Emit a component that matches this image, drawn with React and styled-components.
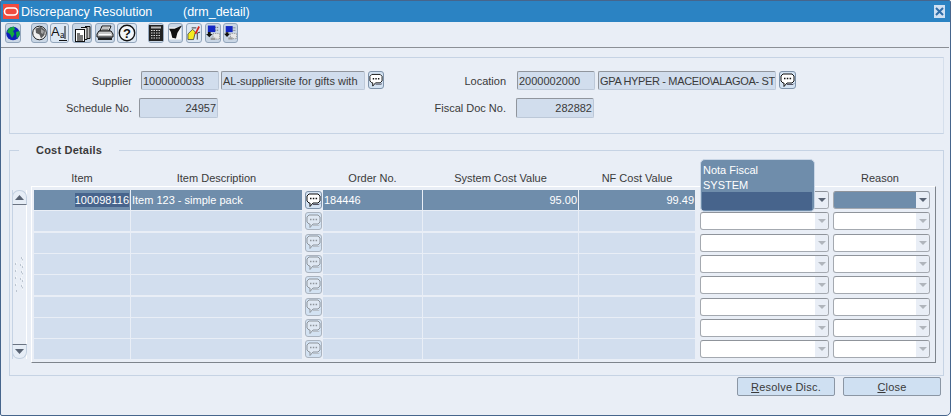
import styled, { createGlobalStyle } from "styled-components";

const GlobalStyle = createGlobalStyle`
    html, body {
        margin: 0;
        background: #ffffff;
    }

    * {
        box-sizing: border-box;
    }
`;

const Window = styled.div`
    width: 951px;
    height: 416px;
    display: flex;
    flex-direction: column;
    background: #e9eef6;
    border: 1px solid #46658c;
    border-radius: 2px 2px 5px 2px;
    font-family: "Liberation Sans", Arial, sans-serif;
    font-size: 11px;
    color: #3a3a3a;
`;

const TitleBar = styled.div`
    height: 21px;
    flex: none;
    display: flex;
    align-items: center;
    padding: 0 5px 0 2px;
    background: #2b83c3;
    color: #ffffff;
    font-size: 12.5px;
`;

const TitleText = styled.span`
    margin-left: 2px;
    width: 162px;
`;

const CloseBox = styled.div`
    margin-left: auto;
    width: 11px;
    height: 13px;
    display: flex;
    align-items: center;
    justify-content: center;
    background: #cfe0f2;
`;

const Toolbar = styled.div`
    height: 26px;
    flex: none;
    display: flex;
    align-items: flex-start;
    padding: 1px 0 0 4px;
    border-bottom: 1px solid #8b8f96;
    margin-right: 1px;
`;

const ToolButton = styled.div`
    width: ${(props) => props.$width || 17}px;
    height: 20px;
    margin-left: ${(props) => props.$ml || 0}px;
    display: flex;
    align-items: center;
    justify-content: center;
    background: ${(props) => (props.$light ? "#dce7f3" : "#c9d6e5")};
    border: 1px solid #93a6bc;
    border-radius: 3px;
`;

const Panel = styled.div`
    height: 77px;
    flex: none;
    margin: 9px 6px 0 8px;
    padding: 12px 0 0 0;
    display: flex;
    flex-direction: column;
    gap: 8px;
    border: 1px solid #c6d3e4;
    border-right-color: #d5dfec;
`;

const FormRow = styled.div`
    height: 20px;
    display: flex;
    align-items: center;
`;

const Label = styled.label`
    width: ${(props) => props.$width}px;
    flex: none;
    padding-top: ${(props) => props.$pt || 0}px;
    text-align: right;
`;

const Field = styled.div`
    width: ${(props) => props.$width}px;
    height: ${(props) => props.$height || 19}px;
    margin-left: ${(props) => props.$ml}px;
    flex: none;
    padding: ${(props) => props.$pt || 0}px 1px 0;
    display: flex;
    align-items: center;
    justify-content: ${(props) => (props.$right ? "flex-end" : "flex-start")};
    background: #d1dded;
    border: 1px solid #bcc8d8;
    border-top-color: #90959d;
    border-left-color: #90959d;
    border-radius: 2px;
    letter-spacing: ${(props) => props.$tight || 0}px;
    white-space: nowrap;
    overflow: hidden;
`;

const ChatButton = styled.div`
    width: ${(props) => props.$width || 16}px;
    height: 18px;
    margin-left: ${(props) => props.$ml || 0}px;
    flex: none;
    display: flex;
    align-items: center;
    justify-content: center;
    background: #d3e2f2;
    border: 1px solid ${(props) => (props.$off ? "#aab3bf" : "#7f93aa")};
    border-radius: 3px;
`;

const Group = styled.div`
    height: 226px;
    flex: none;
    position: relative;
    margin: 16px 6px 0 8px;
    padding: 21px 6px 0 2px;
    display: flex;
    gap: 4px;
    border: 1px solid #c6d3e4;
`;

const GroupTitle = styled.div`
    position: absolute;
    top: -8px;
    left: 9px;
    padding: 0 17px 0 17px;
    background: #e9eef6;
    font-size: 11px;
    font-weight: bold;
    letter-spacing: 0.2px;
    line-height: 15px;
    color: #3a3a3a;
`;

const Scrollbar = styled.div`
    width: 15px;
    height: 169px;
    margin-top: 18px;
    flex: none;
    display: flex;
    flex-direction: column;
    justify-content: space-between;
    align-items: center;
    border-left: 1px solid #c6d3e4;
    border-right: 1px solid #ffffff;
`;

const ScrollButton = styled.div`
    width: 15px;
    height: 15px;
    flex: none;
    display: flex;
    align-items: center;
    justify-content: center;
    background: #e6edf6;
    border: 1px solid #c3d0e0;
    border-radius: ${(props) =>
        props.$down ? "0 0 7px 7px" : "7px 7px 0 0"};
    border-${(props) => (props.$down ? "top" : "bottom")}: 1px solid #6b7482;
`;

const TableArea = styled.div`
    width: 905px;
    flex: none;
`;

const Columns = styled.div`
    display: grid;
    grid-template-columns: 96px 171px 19px 99px 155px 116px 133px 100px;
    column-gap: 1px;
`;

const HeaderRow = styled(Columns)`
    height: 14px;
    padding-left: 3px;
    line-height: 12px;
`;

const HeaderCell = styled.div`
    text-align: center;
    white-space: nowrap;
`;

const Table = styled.div`
    height: 177px;
    padding: 3px 0 0 2px;
    display: flex;
    flex-direction: column;
    gap: 1.33px;
    border-top: 1px solid #ffffff;
    border-left: 1px solid #ffffff;
    border-right: 1px solid #7e848c;
    border-bottom: 1px solid #7e848c;
`;

const Row = styled(Columns)`
    height: 20px;
    flex: none;
`;

const Cell = styled.div`
    display: flex;
    align-items: center;
    justify-content: ${(props) => (props.$right ? "flex-end" : "flex-start")};
    padding: 0 1px 1px;
    white-space: nowrap;
    background: ${(props) => (props.$active ? "#6f8dab" : "#d2deee")};
    color: ${(props) => (props.$active ? "#ffffff" : "inherit")};
`;

const SelectedText = styled.span`
    background: #47648c;
    padding: 1px 0;
`;

const ChatCell = styled.div`
    display: flex;
    align-items: center;
    justify-content: center;
    padding-left: 1px;
`;

const SelectCell = styled.div`
    display: flex;
    align-items: center;
    padding-left: ${(props) => props.$pl}px;
`;

const Select = styled.div`
    width: ${(props) => props.$width}px;
    height: 18px;
    display: flex;
    justify-content: flex-end;
    background: ${(props) => (props.$active ? "#6f8dab" : "#ffffff")};
    border: 1px solid #a4a9b0;
    border-top-color: #8f949b;
    border-radius: 3px;
    overflow: hidden;
`;

const SelectArrow = styled.div`
    width: 13px;
    display: flex;
    align-items: center;
    justify-content: center;
    background: #e9eef6;
`;

const Triangle = styled.div`
    width: 0;
    height: 0;
    border-left: 4px solid transparent;
    border-right: 4px solid transparent;
    border-top: 4px solid ${(props) => (props.$active ? "#5a6474" : "#b0b5bc")};
`;

const ListPopup = styled.div`
    position: absolute;
    left: 690px;
    top: 8px;
    width: 115px;
    height: 53px;
    padding: 2px 2px 2px 1px;
    display: flex;
    flex-direction: column;
    background: #6f8dab;
    border: 1px solid #c9d6e6;
    border-radius: 5px;
    color: #ffffff;
    z-index: 2;
`;

const ListOption = styled.div`
    height: ${(props) => props.$height}px;
    flex: none;
    padding-left: 1px;
    display: flex;
    align-items: center;
    background: ${(props) => (props.$current ? "#47648c" : "transparent")};
`;

const ButtonBar = styled.div`
    margin: 1px 9px 0 0;
    display: flex;
    justify-content: flex-end;
    gap: 8px;
`;

const Button = styled.button`
    width: 98px;
    height: 19px;
    padding: 0;
    font: inherit;
    color: #3a3a3a;
    background: #cfe0f2;
    border: 1px solid #8b96a4;
    border-radius: 2px;
    letter-spacing: 0.2px;
`;

function Logo() {
    return (
        <svg width="16" height="15" viewBox="0 0 16 15">
            <rect width="16" height="15" fill="#f04b3e" />
            <rect x="1.5" y="4" width="13" height="7" rx="3.5" fill="none" stroke="#fff" strokeWidth="1.6" />
        </svg>
    );
}

function CloseIcon() {
    return (
        <svg width="9" height="9" viewBox="0 0 9 9">
            <path d="M1 1l7 7M8 1l-7 7" stroke="#2f6da8" strokeWidth="2" />
        </svg>
    );
}

function ChatIcon({ off }) {
    const ink = off ? "#8f959c" : "#111";
    return (
        <svg width="15" height="15" viewBox="0 0 15 15">
            <path d="M3 1h9l2 2v5l-2 2H7l-3 3.5V10H3L1 8V3z" fill={off ? "#dfe8f3" : "#fff"} stroke={ink} />
            <path d="M4 5.5h1.5M6.8 5.5h1.5M9.6 5.5h1.5" stroke={ink} strokeWidth="1.6" />
            <path d="M7 11.5h6l1-1" stroke={off ? "#b9c0c9" : "#556"} fill="none" />
        </svg>
    );
}

function GlobeIcon() {
    return (
        <svg width="14" height="15" viewBox="0 0 14 15">
            <circle cx="7" cy="7.5" r="6.8" fill="#0d1fb8" />
            <path d="M3 2l5-1.5 1 3-2 1.5 1.5 3-2.5 4-2-4-3-2zM10 6l3.5-1 .3 4-3 3.5z" fill="#12a83f" />
        </svg>
    );
}

function EarthIcon() {
    return (
        <svg width="15" height="16" viewBox="0 0 15 16">
            <circle cx="7.5" cy="8" r="6.8" fill="#f1f1f1" stroke="#222" />
            <path d="M3.5 3.5L9 1.8l4 3.2-.5 5-3.5 3.5-1.5-4L4 8z" fill="#5e5e5e" />
            <path d="M9 4l3 2-1 3-2-1z" fill="#a5a5a5" />
        </svg>
    );
}

function FontIcon() {
    return (
        <svg width="17" height="18" viewBox="0 0 17 18">
            <text x="0" y="12" fontSize="13" fontFamily="Liberation Sans" fill="#111">A</text>
            <text x="9" y="14" fontSize="10" fontFamily="Liberation Serif" fill="#111">a</text>
            <path d="M14 2v13M8 16.5h8" stroke="#111" />
        </svg>
    );
}

function CopiesIcon() {
    return (
        <svg width="17" height="17" viewBox="0 0 17 17">
            <path d="M11 1.5h5v12h-3" fill="#bbb" stroke="#111" />
            <path d="M7 2.5h6v12h-3" fill="#e4e4e4" stroke="#111" />
            <rect x="1.5" y="4.5" width="9" height="12" fill="#fff" stroke="#111" />
            <path d="M3 8h3v8H3zM6 10h3v6H6z" fill="#777" />
        </svg>
    );
}

function PrinterIcon() {
    return (
        <svg width="18" height="16" viewBox="0 0 18 16">
            <path d="M6 1h9l-2 5H4z" fill="#fff" stroke="#111" />
            <path d="M6 3h7M5.5 4.5h7" stroke="#555" strokeWidth=".7" />
            <path d="M3 6h12l2 3v3H1V9z" fill="#c9c9c9" stroke="#111" />
            <path d="M2 12.5h14V15H2z" fill="#222" />
            <path d="M3 9.5h12" stroke="#fff" />
        </svg>
    );
}

function HelpIcon() {
    return (
        <svg width="18" height="18" viewBox="0 0 18 18">
            <circle cx="9" cy="9" r="7.7" fill="#f3f6fa" stroke="#111" strokeWidth="1.4" />
            <text x="9" y="13.5" textAnchor="middle" fontSize="13" fontWeight="bold" fontFamily="Liberation Sans" fill="#111">?</text>
        </svg>
    );
}

function CalculatorIcon() {
    return (
        <svg width="14" height="16" viewBox="0 0 14 16">
            <rect width="14" height="16" fill="#222" />
            <rect x="2" y="1.5" width="10" height="2" fill="#b8b8b8" />
            <path d="M2 5.5h10M2 8h10M2 10.5h10M2 13h10" stroke="#d8d8d8" strokeDasharray="1.5 1" />
        </svg>
    );
}

function PenIcon() {
    return (
        <svg width="14" height="16" viewBox="0 0 14 16">
            <rect y="2" width="13" height="13" fill="#f6f6f6" />
            <path d="M0 3.5h6L14 0 9 8l-1.500 6-4-1L2 7z" fill="#111" />
        </svg>
    );
}

function MarkerIcon() {
    return (
        <svg width="15" height="17" viewBox="0 0 15 17">
            <path d="M5 2.5h5" stroke="#333" />
            <path d="M1 9l5-5 3 3-2 8H1z" fill="#f4ec20" stroke="#333" strokeWidth=".8" />
            <path d="M9 9l4-8" stroke="#d8241c" strokeWidth="1.8" />
            <path d="M11 15V8l3-1" stroke="#333" fill="none" />
        </svg>
    );
}

function TransferIcon() {
    return (
        <svg width="15" height="16" viewBox="0 0 15 16">
            <rect x="2" y="0" width="8" height="7" fill="#1226c4" />
            <path d="M10 2h4M10 5h4" stroke="#555" strokeDasharray="1 1" />
            <path d="M2 7h3v2h2l-3.5 3.5L0 9h2z" fill="#111" />
            <path d="M7.500 8.500h7v6h-7z" fill="#e6e6e6" stroke="#888" strokeDasharray="1 1" />
            <path d="M5 13h5v2.500H5z" fill="#999" />
        </svg>
    );
}

function GripIcon() {
    return (
        <svg width="9" height="36" viewBox="0 0 9 36">
            <path
                d="M6 1h1M8 3H7M0 7h1M5 8h1M7 10h1M0 14h1M6 15h1M8 17H7M0 21h1M5 22h1M7 24h1M0 28h1M6 29h1M8 31H7M1 34h1"
                stroke="#8f9caa"
            />
            <path
                d="M7 0h1M8 4H7M1 6h1M6 7h1M8 9h1M1 13h1M7 14h1M8 18H7M1 20h1M6 21h1M8 23h1M1 27h1M7 28h1M8 32H7"
                stroke="#ffffff"
            />
        </svg>
    );
}

const HEADERS = [
    "Item",
    "Item Description",
    "",
    "Order No.",
    "System Cost Value",
    "NF Cost Value",
    "",
    "Reason",
];

const EMPTY_ROWS = [1, 2, 3, 4, 5, 6, 7];

function DataRow({ active, item, description, order, system, nf }) {
    return (
        <Row>
            <Cell $active={active} $right>
                {item && <SelectedText>{item}</SelectedText>}
            </Cell>
            <Cell $active={active}>{description}</Cell>
            <ChatCell>
                <ChatButton $off={!active} $width={17}>
                    <ChatIcon off={!active} />
                </ChatButton>
            </ChatCell>
            <Cell $active={active}>{order}</Cell>
            <Cell $active={active} $right>{system}</Cell>
            <Cell $active={active} $right>{nf}</Cell>
            <SelectCell $pl={4}>
                <Select $width={129}>
                    <SelectArrow>
                        <Triangle $active={active} />
                    </SelectArrow>
                </Select>
            </SelectCell>
            <SelectCell $pl={3}>
                <Select $width={97} $active={active}>
                    <SelectArrow>
                        <Triangle $active={active} />
                    </SelectArrow>
                </Select>
            </SelectCell>
        </Row>
    );
}

export default function App() {
    return (
        <>
            <GlobalStyle />
            <Window>
                <TitleBar>
                    <Logo />
                    <TitleText>Discrepancy Resolution</TitleText>
                    <span>(drm_detail)</span>
                    <CloseBox>
                        <CloseIcon />
                    </CloseBox>
                </TitleBar>
                <Toolbar>
                    <ToolButton $width={16}><GlobeIcon /></ToolButton>
                    <ToolButton $ml={10}><EarthIcon /></ToolButton>
                    <ToolButton $ml={2} $width={19} $light><FontIcon /></ToolButton>
                    <ToolButton $ml={3} $width={20}><CopiesIcon /></ToolButton>
                    <ToolButton $ml={3} $width={20}><PrinterIcon /></ToolButton>
                    <ToolButton $ml={2} $width={20} $light><HelpIcon /></ToolButton>
                    <ToolButton $ml={11} $width={16}><CalculatorIcon /></ToolButton>
                    <ToolButton $ml={4} $width={15}><PenIcon /></ToolButton>
                    <ToolButton $ml={3} $width={16} $light><MarkerIcon /></ToolButton>
                    <ToolButton $ml={3} $width={16}><TransferIcon /></ToolButton>
                    <ToolButton $ml={2} $width={15}><TransferIcon /></ToolButton>
                </Toolbar>
                <Panel>
                    <FormRow>
                        <Label $width={122} $pt={2}>Supplier</Label>
                        <Field $ml={9} $width={78} $pt={1}>1000000033</Field>
                        <Field $ml={2} $width={144} $pt={1}>AL-suppliersite for gifts with</Field>
                        <ChatButton $ml={3}><ChatIcon /></ChatButton>
                        <Label $width={122} $pt={2}>Location</Label>
                        <Field $ml={11} $width={78} $pt={1}>2000002000</Field>
                        <Field $ml={3} $width={178} $pt={1} $tight={-0.35}>GPA HYPER - MACEIO\ALAGOA- ST</Field>
                        <ChatButton $ml={3} $width={17}><ChatIcon /></ChatButton>
                    </FormRow>
                    <FormRow>
                        <Label $width={122}>Schedule No.</Label>
                        <Field $ml={7} $width={79} $height={20} $right>24957</Field>
                        <Label $width={288}>Fiscal Doc No.</Label>
                        <Field $ml={10} $width={78} $height={20} $right>282882</Field>
                    </FormRow>
                </Panel>
                <Group>
                    <GroupTitle>Cost Details</GroupTitle>
                    <Scrollbar>
                        <ScrollButton>
                            <svg width="9" height="5" viewBox="0 0 9 5">
                                <path d="M4.5 0L9 5H0z" fill="#5a6474" />
                            </svg>
                        </ScrollButton>
                        <GripIcon />
                        <ScrollButton $down>
                            <svg width="9" height="5" viewBox="0 0 9 5">
                                <path d="M0 0h9L4.5 5z" fill="#5a6474" />
                            </svg>
                        </ScrollButton>
                    </Scrollbar>
                    <TableArea>
                        <HeaderRow>
                            {HEADERS.map((header, index) => (
                                <HeaderCell key={index}>{header}</HeaderCell>
                            ))}
                        </HeaderRow>
                        <Table>
                            <DataRow
                                active
                                item="100098116"
                                description="Item 123 - simple pack"
                                order="184446"
                                system="95.00"
                                nf="99.49"
                            />
                            {EMPTY_ROWS.map((row) => (
                                <DataRow key={row} />
                            ))}
                        </Table>
                    </TableArea>
                    <ListPopup>
                        <ListOption $height={15}>Nota Fiscal</ListOption>
                        <ListOption $height={15}>SYSTEM</ListOption>
                        <ListOption $height={18} $current />
                    </ListPopup>
                </Group>
                <ButtonBar>
                    <Button><u>R</u>esolve Disc.</Button>
                    <Button><u>C</u>lose</Button>
                </ButtonBar>
            </Window>
        </>
    );
}
